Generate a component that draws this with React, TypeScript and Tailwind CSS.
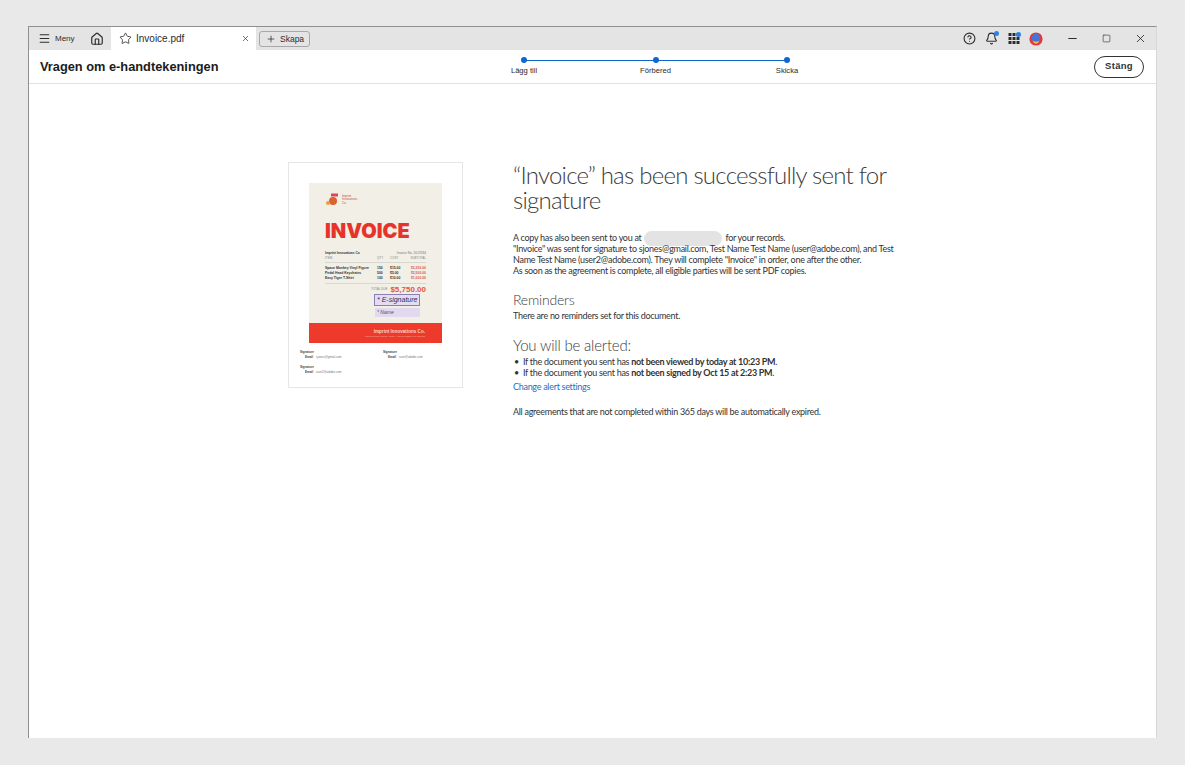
import { Menu, House, Star, X, Plus, CircleHelp, Bell, Minus, Square } from "lucide-react";

const arial = "font-['Liberation_Sans',Arial,sans-serif]";

function AppsIcon() {
  const cells = [0, 1, 2].flatMap((r) => [0, 1, 2].map((c) => [r, c]));
  return (
    <svg width="13" height="13" viewBox="0 0 13 13">
      {cells.map(([r, c]) => (
        <rect key={`${r}-${c}`} x={c * 4 + 0.5} y={r * 4 + 1} width="3" height="3" fill="#2c2c2c" />
      ))}
      <circle cx="10.5" cy="2.5" r="2.5" fill="#2f80e0" />
    </svg>
  );
}

function Avatar() {
  return (
    <svg width="14" height="14" viewBox="0 0 14 14">
      <circle cx="7" cy="7" r="6.6" fill="#df3a3f" />
      <circle cx="7" cy="6" r="4.2" fill="#4277d8" />
      <path d="M3.5 8.5 Q7 11 10.5 8.5 L9 11 Q7 12 5 11 Z" fill="#f0c060" />
    </svg>
  );
}

function Step({ label }: { label: string }) {
  return (
    <div className="flex w-[60px] flex-col items-center">
      <div className="z-10 h-[6px] w-[6px] rounded-full bg-[#0f66d0]" />
      <div className={`${arial} mt-[2px] text-[7.6px] leading-[11px] text-[#2a2a2a]`}>{label}</div>
    </div>
  );
}

function InvoiceRow({ a, b, c, d }: { a: string; b: string; c: string; d: string }) {
  return (
    <div className="grid grid-cols-[52px_13px_16px_1fr] text-[3.4px] font-bold leading-[5px] text-[#333]">
      <span>{a}</span>
      <span>{b}</span>
      <span>{c}</span>
      <span className="text-right text-[#d8604f]">{d}</span>
    </div>
  );
}

function Sig({ email }: { email: string }) {
  return (
    <div className="text-[3px] leading-[5px] text-[#444]">
      <div className="font-bold">Signature</div>
      <div className="pl-[5px]">
        <span className="font-bold">Email</span>
        <span className="ml-[3px] text-[#777]">{email}</span>
      </div>
    </div>
  );
}

function Alert({ children }: { children: React.ReactNode }) {
  return (
    <li className="flex">
      <span className="w-[10px] shrink-0 pl-[1px]">•</span>
      <span>{children}</span>
    </li>
  );
}

function Thumbnail() {
  return (
    <div className={`${arial} h-[226px] w-[175px] shrink-0 border border-[#e6e6e6] bg-white px-[11px] pt-[20px]`}>
      <div className="mx-[9px] flex h-[160px] flex-col bg-[#f1efe6]">
        <div className="flex items-center gap-[1px] pl-[16px] pt-[10px]">
          <svg width="16" height="14" viewBox="0 0 16 14">
            <circle cx="8" cy="8" r="4" fill="#d9642d" />
            <rect x="6" y="0.5" width="7" height="3" fill="#e0455c" />
            <circle cx="3" cy="10" r="2" fill="#e8a040" />
          </svg>
          <div className="text-[3px] leading-[3.5px] text-[#c9503f]">
            Imprint
            <br />
            Innovations
            <br />
            Co.
          </div>
        </div>
        <div className="mt-[14px] pl-[16px] font-['Inter',sans-serif] text-[20px] font-black leading-[20px] text-[#e5352b]">INVOICE</div>
        <div className="mt-[10px] flex justify-between px-[16px] text-[3.2px] leading-[5px] text-[#333]">
          <span className="font-bold">Imprint Innovations Co</span>
          <span className="text-[#777]">Invoice No. 2023184</span>
        </div>
        <div className="mx-[16px] grid grid-cols-[52px_13px_16px_1fr] border-b border-[#d8d8d0] pb-[2px] text-[3px] leading-[4px] text-[#888]">
          <span>ITEM</span>
          <span>QTY</span>
          <span>COST</span>
          <span className="text-right">SUBTOTAL</span>
        </div>
        <div className="mx-[16px] mt-[3px]">
          <InvoiceRow a="Space Monkey Vinyl Figure" b="150" c="$15.00" d="$2,250.00" />
          <InvoiceRow a="Pedal Head Keychains" b="500" c="$5.00" d="$2,500.00" />
          <InvoiceRow a="Easy Tiger T-Shirt" b="100" c="$10.00" d="$1,000.00" />
        </div>
        <div className="mx-[16px] mt-[2px] border-t border-[#d8d8d0] pt-[1px]">
          <div className="flex items-center justify-end gap-[3px]">
            <span className="text-[3px] text-[#888]">TOTAL DUE</span>
            <span className="text-[8px] font-bold leading-[9px] text-[#e5553f]">$5,750.00</span>
          </div>
        </div>
        <div className="ml-[65px] flex h-[12px] w-[46px] items-center border border-[#8a80b8] bg-[#e4dcf2] pl-[2px] text-[7px] italic text-[#33304a]">
          * E-signature
        </div>
        <div className="ml-[66px] mt-[2px] flex h-[9px] w-[45px] items-center bg-[#e2d9f0] pl-[2px] text-[5px] italic text-[#55506a]">
          * Name
        </div>
        <div className="mt-auto flex h-[20px] flex-col items-end justify-center bg-[#ee3a2b] pr-[17px] text-white">
          <div className="text-[4.6px] font-bold leading-[6px] text-[#f6d5c8]">Imprint Innovations Co.</div>
          <div className="text-[2.5px] leading-[3px] text-[#f4b5a8]">123 Company Road, Mesa, Arizona 85201 Tel: 555 55</div>
        </div>
      </div>
      <div className="mt-[7px] grid grid-cols-[83px_1fr]">
        <Sig email="sjones@gmail.com" />
        <Sig email="user@adobe.com" />
        <div className="mt-[5px]">
          <Sig email="user2@adobe.com" />
        </div>
      </div>
    </div>
  );
}

export default function App() {
  return (
    <div className="h-[765px] w-[1185px] overflow-hidden bg-[#e9e9e9] pb-[27px] pl-[28px] pr-[28px] pt-[26px]">
      <div className="flex h-[712px] flex-col border-l border-r border-t border-l-[#8f8f8f] border-r-[#d8d8d8] border-t-[#8f8f8f] bg-white">
        <div className={`${arial} flex h-[23px] shrink-0 items-stretch bg-[#e4e4e4] text-[#2c2c2c]`}>
          <div className="flex w-[53px] items-center pl-[9px]">
            <Menu size={13} strokeWidth={1.9} />
            <span className="ml-[4px] text-[8px]">Meny</span>
          </div>
          <div className="flex w-[29px] items-center justify-center pl-[1px]">
            <House size={14} strokeWidth={2} />
          </div>
          <div className="flex w-[145px] items-center bg-white pl-[8px]">
            <Star size={13} strokeWidth={1.5} />
            <span className="ml-[4px] text-[10px]">Invoice.pdf</span>
            <X size={9} strokeWidth={2} className="ml-[57px] text-[#444]" />
          </div>
          <div className="ml-[3px] mt-[4px] flex h-[16px] w-[51px] items-center rounded-[3px] border border-[#a8a8a8] pl-[6px]">
            <Plus size={10} strokeWidth={1.8} />
            <span className="ml-[4px] text-[8.5px]">Skapa</span>
          </div>
          <div className="ml-auto flex items-center">
            <CircleHelp size={13} strokeWidth={2} />
            <div className="relative ml-[9px]">
              <Bell size={13} strokeWidth={2} />
              <span className="absolute right-[-1px] top-[-1px] h-[5px] w-[5px] rounded-full bg-[#2f80e0]" />
            </div>
            <div className="ml-[10px] flex">
              <AppsIcon />
            </div>
            <div className="ml-[8px] flex">
              <Avatar />
            </div>
            <div className="ml-[23px] flex">
              <Minus size={13} strokeWidth={2} />
            </div>
            <div className="ml-[23px] flex">
              <Square size={9} strokeWidth={1.6} />
            </div>
            <div className="ml-[23px] mr-[9px] flex">
              <X size={13} strokeWidth={1.6} />
            </div>
          </div>
        </div>
        <div className={`${arial} flex h-[34px] shrink-0 items-center border-b border-[#e2e2e2] pl-[11px] pr-[12px]`}>
          <div className="w-[454px] pt-[1px] text-[12.8px] font-bold text-[#1b1b1b]">Vragen om e-handtekeningen</div>
          <div className="relative flex w-[323px] justify-between self-start pt-[7px]">
            <div className="absolute left-[30px] right-[30px] top-[9.5px] h-[1.5px] bg-[#0f66d0]" />
            <Step label="Lägg till" />
            <Step label="Förbered" />
            <Step label="Skicka" />
          </div>
          <div className="ml-auto flex h-[22px] w-[50px] items-center justify-center rounded-full border-[1.5px] border-[#333] text-[9.5px] font-bold tracking-[0.3px] text-[#333]">
            Stäng
          </div>
        </div>
        <div className="flex flex-1 pl-[259px] pt-[78px]">
          <Thumbnail />
          <div className="ml-[50px] w-[390px] font-['Lato',sans-serif] text-[9px] leading-[11px] tracking-[-0.29px] text-[#333]">
            <h1 className="text-[24px] font-light leading-[25px] tracking-[-0.75px] text-[#3c3c3c]">
              “Invoice” has been successfully sent for signature
            </h1>
            <p className="mt-[20px]">
              A copy has also been sent to you at
              <span className="mx-[3px] my-[-3px] inline-block h-[15px] w-[78px] rounded-full bg-[#e3e3e3] align-middle" />
              for your records.
              <br />
              "Invoice" was sent for signature to sjones@gmail.com, Test Name Test Name (user@adobe.com), and Test Name Test Name (user2@adobe.com). They will complete "Invoice" in order, one after the other.
              <br />
              As soon as the agreement is complete, all eligible parties will be sent PDF copies.
            </p>
            <h2 className="mt-[15px] text-[14px] font-light leading-[17px] tracking-[-0.2px] text-[#3c3c3c]">Reminders</h2>
            <p className="mt-[2px]">There are no reminders set for this document.</p>
            <h2 className="mt-[15px] text-[15px] font-light leading-[18px] tracking-[-0.2px] text-[#3c3c3c]">You will be alerted:</h2>
            <ul className="mt-[1.5px]">
              <Alert>If the document you sent has <b>not been viewed by today at 10:23 PM</b>.</Alert>
              <Alert>If the document you sent has <b>not been signed by Oct 15 at 2:23 PM</b>.</Alert>
            </ul>
            <a className="mt-[3px] block text-[#1f6fc0]">Change alert settings</a>
            <p className="mt-[14px]">All agreements that are not completed within 365 days will be automatically expired.</p>
          </div>
        </div>
      </div>
    </div>
  );
}
